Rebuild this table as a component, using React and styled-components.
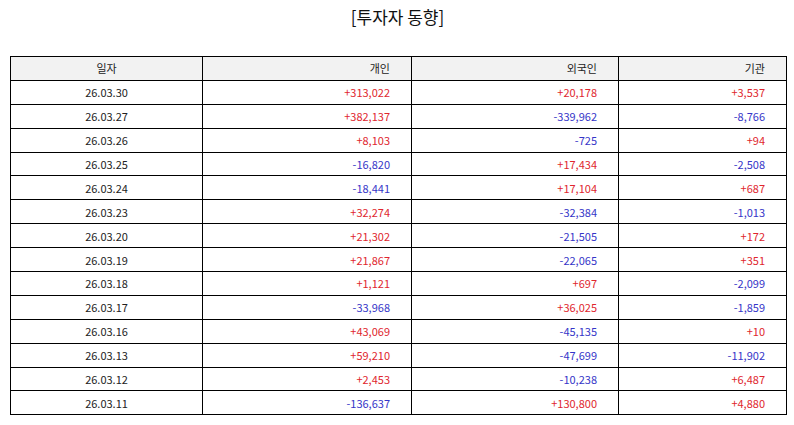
import React from "react";
import styled, { createGlobalStyle } from "styled-components";

const Global = createGlobalStyle`
  html, body { margin: 0; padding: 0; background: #fff; }
  body { font-family: "Noto Sans CJK KR", "Noto Sans", sans-serif; }
`;

const Page = styled.div`
  width: 794px;
  height: 425px;
  box-sizing: border-box;
  padding: 5px 9px 0 10px;
  display: flex;
  flex-direction: column;
  align-items: stretch;
`;

const Title = styled.h1`
  margin: 0 0 27px 0;
  font-size: 17px;
  font-weight: 400;
  line-height: 24px;
  text-align: center;
  color: #111;
`;

const Table = styled.table`
  width: 776px;
  border-collapse: collapse;
  table-layout: fixed;
  font-size: 11px;
  color: #222;
`;

const cell = `
  box-sizing: border-box;
  height: 23.9px;
  border: 1.5px solid #000;
  line-height: 20px;
  padding-top: 0;
  padding-bottom: 0;
  padding-left: 0;
`;

const Th = styled.th`
  ${cell}
  padding-right: ${(p) => (p.$align === "center" ? "0" : "21px")};
  background: #f2f2f2;
  font-weight: 400;
  text-align: ${(p) => p.$align};
`;

const Td = styled.td`
  ${cell}
  padding-right: ${(p) => (p.$align === "center" ? "0" : "21px")};
  text-align: ${(p) => p.$align};
  color: ${(p) => (p.$tone === "up" ? "#e0262e" : p.$tone === "down" ? "#3535c8" : "#222")};
`;

const rows = [
  ["26.03.30", "+313,022", "+20,178", "+3,537"],
  ["26.03.27", "+382,137", "-339,962", "-8,766"],
  ["26.03.26", "+8,103", "-725", "+94"],
  ["26.03.25", "-16,820", "+17,434", "-2,508"],
  ["26.03.24", "-18,441", "+17,104", "+687"],
  ["26.03.23", "+32,274", "-32,384", "-1,013"],
  ["26.03.20", "+21,302", "-21,505", "+172"],
  ["26.03.19", "+21,867", "-22,065", "+351"],
  ["26.03.18", "+1,121", "+697", "-2,099"],
  ["26.03.17", "-33,968", "+36,025", "-1,859"],
  ["26.03.16", "+43,069", "-45,135", "+10"],
  ["26.03.13", "+59,210", "-47,699", "-11,902"],
  ["26.03.12", "+2,453", "-10,238", "+6,487"],
  ["26.03.11", "-136,637", "+130,800", "+4,880"],
];

const tone = (v) => (v.startsWith("+") ? "up" : v.startsWith("-") ? "down" : "none");

export default function App() {
  return (
    <>
      <Global />
      <Page>
        <Title>[투자자 동향]</Title>
        <Table>
          <colgroup>
            <col style={{ width: 192 }} />
            <col style={{ width: 209 }} />
            <col style={{ width: 207 }} />
            <col style={{ width: 168 }} />
          </colgroup>
          <thead>
            <tr>
              <Th $align="center">일자</Th>
              <Th $align="right">개인</Th>
              <Th $align="right">외국인</Th>
              <Th $align="right">기관</Th>
            </tr>
          </thead>
          <tbody>
            {rows.map((r) => (
              <tr key={r[0]}>
                <Td $align="center">{r[0]}</Td>
                {r.slice(1).map((v, i) => (
                  <Td key={i} $align="right" $tone={tone(v)}>
                    {v}
                  </Td>
                ))}
              </tr>
            ))}
          </tbody>
        </Table>
      </Page>
    </>
  );
}
